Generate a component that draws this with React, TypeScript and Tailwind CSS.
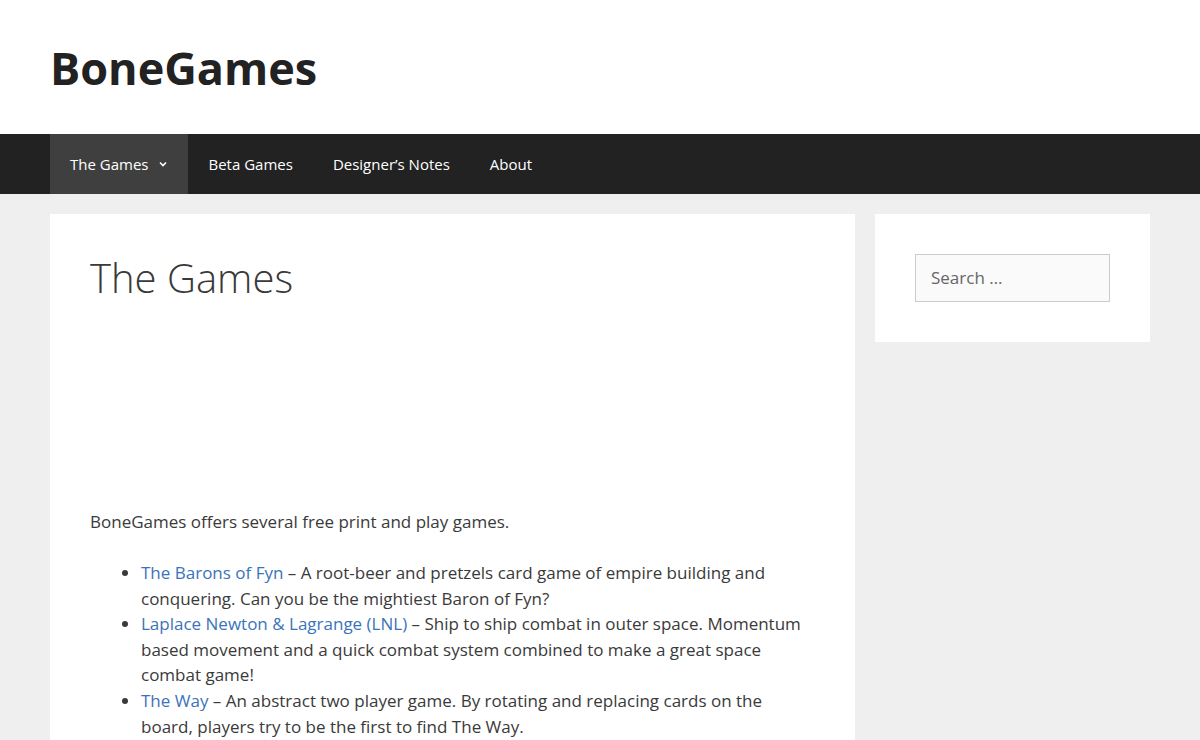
export default function App() {
  const f = { fontFamily: '"Open Sans", sans-serif' };
  return (
    <div style={f} className="min-h-[740px] bg-[#efefef] text-[#3a3a3a]">
      <header className="bg-white h-[134px] flex items-center px-[50px]">
        <div className="text-[45px] font-bold text-[#222] leading-none">BoneGames</div>
      </header>
      <nav className="bg-[#222] h-[60px] px-[50px] flex text-white text-[15px]">
        <div className="bg-[#3f3f3f] pl-5 pr-5 flex items-center gap-[10px]">
          <span>The Games</span>
          <svg width="10" height="10" viewBox="0 0 10 10" fill="none" stroke="white" strokeWidth="1.6"><path d="M2 3.5l3 3 3-3" /></svg>
        </div>
        <div className="px-5 flex items-center">Beta Games</div>
        <div className="px-5 flex items-center">Designer’s Notes</div>
        <div className="px-5 flex items-center">About</div>
      </nav>
      <div className="flex gap-5 px-[50px] pt-5 items-start">
        <main className="bg-white w-[805px] px-10 pt-[40px] pb-10">
          <h1 className="text-[40px] font-light leading-[1.2] text-[#3a3a3a]">The Games</h1>
          <div className="h-[207px]"></div>
          <p className="text-[17px] leading-[26px]">BoneGames offers several free print and play games.</p>
          <ul className="list-disc pl-[51px] mt-[25px] text-[17px] leading-[25.6px]">
            <li><a className="text-[#3b73b9]">The Barons of Fyn</a> – A root-beer and pretzels card game of empire building and conquering. Can you be the mightiest Baron of Fyn?</li>
            <li><a className="text-[#3b73b9]">Laplace Newton &amp; Lagrange (LNL)</a> – Ship to ship combat in outer space. Momentum based movement and a quick combat system combined to make a great space combat game!</li>
            <li><a className="text-[#3b73b9]">The Way</a> – An abstract two player game. By rotating and replacing cards on the board, players try to be the first to find The Way.</li>
          </ul>
        </main>
        <aside className="bg-white w-[275px] p-10">
          <div className="h-12 border border-[#ccc] bg-[#fafafa] px-[15px] flex items-center text-[17px] text-[#666]">Search …</div>
        </aside>
      </div>
    </div>
  );
}
